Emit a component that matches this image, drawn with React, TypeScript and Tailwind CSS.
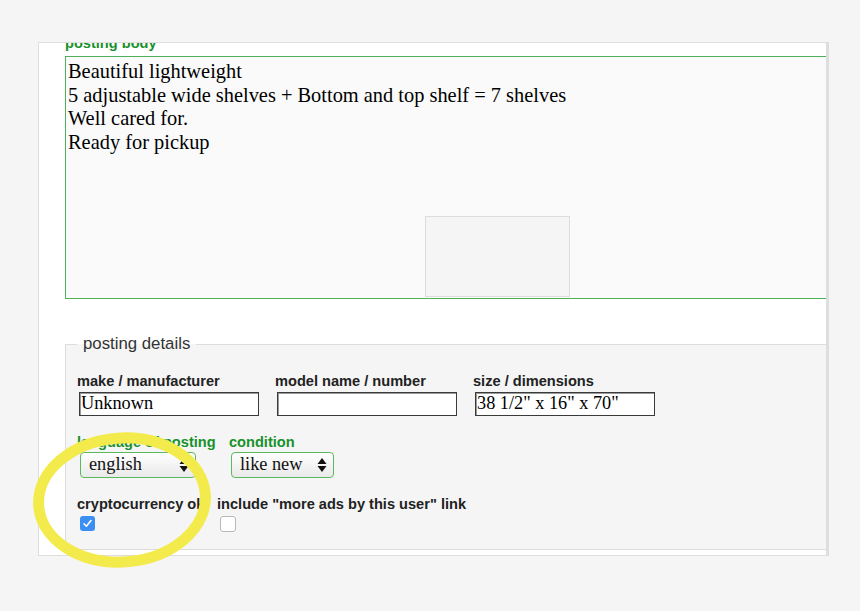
import React from "react";

const sans = { fontFamily: '"Liberation Sans", Arial, sans-serif' };
const serif = { fontFamily: '"Liberation Serif", "Times New Roman", serif' };

function TextField({ label, value, green }: { label: string; value?: string; green?: boolean }) {
  return (
    <div className="w-[198px] shrink-0">
      <div className={`text-[14.6px] font-bold leading-[16px] whitespace-nowrap ${green ? "text-[#17912a]" : "text-[#222]"}`} style={sans}>
        {label}
      </div>
      <input
        readOnly
        value={value || ""}
        className="mt-[3px] ml-[2px] h-[24px] w-[180px] border border-[#3a3a3a] bg-white px-[1px] text-[18.3px] text-black shadow-[inset_1px_1px_0_#9a9a9a] outline-none"
        style={serif}
      />
    </div>
  );
}

function Arrows() {
  return (
    <svg width="10" height="16" viewBox="0 0 10 16" className="shrink-0">
      <path d="M5 1 L9.5 7 L0.5 7 Z" fill="#111" />
      <path d="M5 15 L9.5 9 L0.5 9 Z" fill="#111" />
    </svg>
  );
}

function FakeSelect({ value, width }: { value: string; width: string }) {
  return (
    <div
      className={`mt-[2px] flex h-[26px] ${width} items-center justify-between rounded-[4px] border border-[#5cb85c] bg-gradient-to-b from-white to-[#e9e9e9] pl-[8px] pr-[6px] text-[18.3px] text-[#111]`}
      style={serif}
    >
      <span>{value}</span>
      <Arrows />
    </div>
  );
}

export default function App() {
  return (
    <div className="relative h-[611px] w-[860px] overflow-hidden bg-[#f5f5f5] pl-[38px] pt-[42px]">
      <div className="h-[514px] w-[791px] overflow-hidden border border-r-[3px] border-[#dedede] bg-white pl-[26px]">
        <div className="-mt-[8px] h-[16px] text-[14.6px] font-bold leading-[16px] text-[#17912a]" style={sans}>
          posting body
        </div>
        <div className="relative mt-[5px] h-[243px] w-[800px] border border-[#4fb05c] bg-[#fafafa] pl-[2px] pt-[3px] text-[20.4px] leading-[23.7px] text-black" style={serif}>
          <div>Beautiful lightweight</div>
          <div>5 adjustable wide shelves + Bottom and top shelf = 7 shelves</div>
          <div>Well cared for.</div>
          <div>Ready for pickup</div>
          <div className="absolute left-[359px] top-[159px] h-[81px] w-[145px] border border-[#dcdcdc] bg-[#f5f5f5]" />
        </div>

        <fieldset className="mt-[36px] w-[800px] border border-[#dcdcdc] bg-[#f5f5f5] px-[11px] pb-[17px] pt-[20px]">
          <legend className="px-[6px] text-[16.8px] leading-[18px] text-[#333]" style={sans}>
            posting details
          </legend>
          <div className="flex">
            <TextField label="make / manufacturer" value="Unknown" />
            <TextField label="model name / number" />
            <TextField label="size / dimensions" value={'38 1/2" x 16" x 70"'} />
          </div>
          <div className="mt-[18px] flex">
            <div className="w-[152px] shrink-0">
              <div className="whitespace-nowrap text-[14.6px] font-bold leading-[16px] text-[#17912a]" style={sans}>
                language of posting
              </div>
              <div className="ml-[3px]">
                <FakeSelect value="english" width="w-[116px]" />
              </div>
            </div>
            <div>
              <div className="text-[14.6px] font-bold leading-[16px] text-[#17912a]" style={sans}>
                condition
              </div>
              <div className="ml-[2px]">
                <FakeSelect value="like new" width="w-[103px]" />
              </div>
            </div>
          </div>
          <div className="mt-[18px] flex">
            <div className="w-[140px] shrink-0">
              <div className="whitespace-nowrap text-[14.6px] font-bold leading-[16px] text-[#222]" style={sans}>
                cryptocurrency ok
              </div>
              <div className="ml-[3px] mt-[4px] flex h-[15px] w-[15px] items-center justify-center rounded-[3px] bg-[#3b8ef2]">
                <svg width="11" height="11" viewBox="0 0 11 11">
                  <path d="M2 5.8 L4.4 8.2 L9 2.6" fill="none" stroke="white" strokeWidth="1.6" strokeLinecap="round" strokeLinejoin="round" />
                </svg>
              </div>
            </div>
            <div>
              <div className="whitespace-nowrap text-[14.6px] font-bold leading-[16px] text-[#222]" style={sans}>
                include "more ads by this user" link
              </div>
              <div className="ml-[3px] mt-[4px] h-[16px] w-[16px] rounded-[3px] border border-[#b8b8b8] bg-white" />
            </div>
          </div>
        </fieldset>
      </div>

      <svg className="pointer-events-none absolute left-0 top-0" width="860" height="611" viewBox="0 0 860 611">
        <ellipse cx="122" cy="500" rx="83.5" ry="62" fill="none" stroke="#f3ea4c" strokeWidth="11" transform="rotate(-4 122 500)" />
      </svg>
    </div>
  );
}
